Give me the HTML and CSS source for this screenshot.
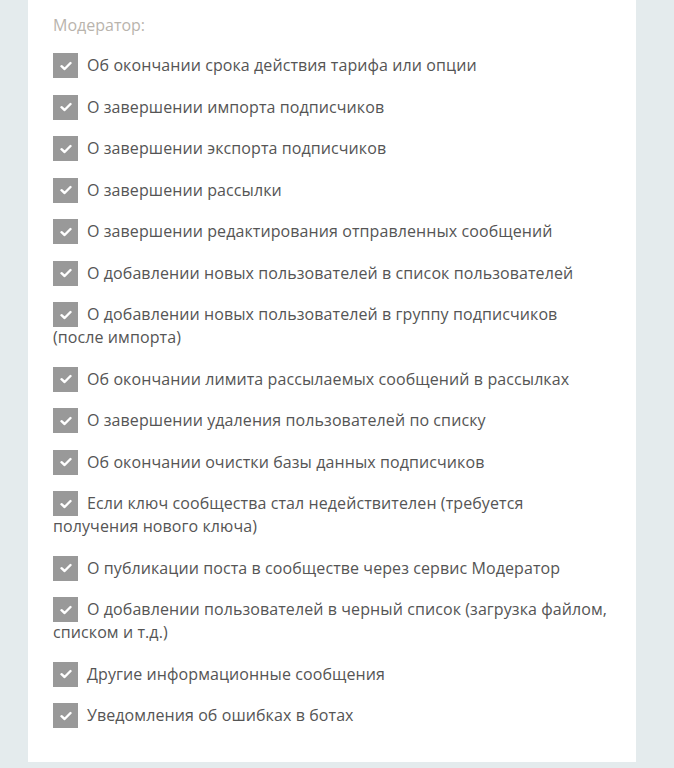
FILE: index.html
```html
<!DOCTYPE html>
<html lang="ru">
<head>
<meta charset="utf-8">
<link rel="stylesheet" href="styles.css">
</head>
<body>
<div class="panel">
  <div class="title">Модератор:</div>
  <ul class="list">
    <li class="item"><span class="cb"><svg viewBox="0 0 12 10" width="12" height="10"><path d="M1.5 5.2 L4.6 8 L10.5 2" fill="none" stroke="#fff" stroke-width="2.4" stroke-linecap="round" stroke-linejoin="round"/></svg></span>Об окончании срока действия тарифа или опции</li>
    <li class="item"><span class="cb"><svg viewBox="0 0 12 10" width="12" height="10"><path d="M1.5 5.2 L4.6 8 L10.5 2" fill="none" stroke="#fff" stroke-width="2.4" stroke-linecap="round" stroke-linejoin="round"/></svg></span>О завершении импорта подписчиков</li>
    <li class="item"><span class="cb"><svg viewBox="0 0 12 10" width="12" height="10"><path d="M1.5 5.2 L4.6 8 L10.5 2" fill="none" stroke="#fff" stroke-width="2.4" stroke-linecap="round" stroke-linejoin="round"/></svg></span>О завершении экспорта подписчиков</li>
    <li class="item"><span class="cb"><svg viewBox="0 0 12 10" width="12" height="10"><path d="M1.5 5.2 L4.6 8 L10.5 2" fill="none" stroke="#fff" stroke-width="2.4" stroke-linecap="round" stroke-linejoin="round"/></svg></span>О завершении рассылки</li>
    <li class="item"><span class="cb"><svg viewBox="0 0 12 10" width="12" height="10"><path d="M1.5 5.2 L4.6 8 L10.5 2" fill="none" stroke="#fff" stroke-width="2.4" stroke-linecap="round" stroke-linejoin="round"/></svg></span>О завершении редактирования отправленных сообщений</li>
    <li class="item"><span class="cb"><svg viewBox="0 0 12 10" width="12" height="10"><path d="M1.5 5.2 L4.6 8 L10.5 2" fill="none" stroke="#fff" stroke-width="2.4" stroke-linecap="round" stroke-linejoin="round"/></svg></span>О добавлении новых пользователей в список пользователей</li>
    <li class="item"><span class="cb"><svg viewBox="0 0 12 10" width="12" height="10"><path d="M1.5 5.2 L4.6 8 L10.5 2" fill="none" stroke="#fff" stroke-width="2.4" stroke-linecap="round" stroke-linejoin="round"/></svg></span>О добавлении новых пользователей в группу подписчиков (после импорта)</li>
    <li class="item"><span class="cb"><svg viewBox="0 0 12 10" width="12" height="10"><path d="M1.5 5.2 L4.6 8 L10.5 2" fill="none" stroke="#fff" stroke-width="2.4" stroke-linecap="round" stroke-linejoin="round"/></svg></span>Об окончании лимита рассылаемых сообщений в рассылках</li>
    <li class="item"><span class="cb"><svg viewBox="0 0 12 10" width="12" height="10"><path d="M1.5 5.2 L4.6 8 L10.5 2" fill="none" stroke="#fff" stroke-width="2.4" stroke-linecap="round" stroke-linejoin="round"/></svg></span>О завершении удаления пользователей по списку</li>
    <li class="item"><span class="cb"><svg viewBox="0 0 12 10" width="12" height="10"><path d="M1.5 5.2 L4.6 8 L10.5 2" fill="none" stroke="#fff" stroke-width="2.4" stroke-linecap="round" stroke-linejoin="round"/></svg></span>Об окончании очистки базы данных подписчиков</li>
    <li class="item"><span class="cb"><svg viewBox="0 0 12 10" width="12" height="10"><path d="M1.5 5.2 L4.6 8 L10.5 2" fill="none" stroke="#fff" stroke-width="2.4" stroke-linecap="round" stroke-linejoin="round"/></svg></span>Если ключ сообщества стал недействителен (требуется получения нового ключа)</li>
    <li class="item"><span class="cb"><svg viewBox="0 0 12 10" width="12" height="10"><path d="M1.5 5.2 L4.6 8 L10.5 2" fill="none" stroke="#fff" stroke-width="2.4" stroke-linecap="round" stroke-linejoin="round"/></svg></span>О публикации поста в сообществе через сервис Модератор</li>
    <li class="item"><span class="cb"><svg viewBox="0 0 12 10" width="12" height="10"><path d="M1.5 5.2 L4.6 8 L10.5 2" fill="none" stroke="#fff" stroke-width="2.4" stroke-linecap="round" stroke-linejoin="round"/></svg></span>О добавлении пользователей в черный список (загрузка файлом, списком и т.д.)</li>
    <li class="item"><span class="cb"><svg viewBox="0 0 12 10" width="12" height="10"><path d="M1.5 5.2 L4.6 8 L10.5 2" fill="none" stroke="#fff" stroke-width="2.4" stroke-linecap="round" stroke-linejoin="round"/></svg></span>Другие информационные сообщения</li>
    <li class="item"><span class="cb"><svg viewBox="0 0 12 10" width="12" height="10"><path d="M1.5 5.2 L4.6 8 L10.5 2" fill="none" stroke="#fff" stroke-width="2.4" stroke-linecap="round" stroke-linejoin="round"/></svg></span>Уведомления об ошибках в ботах</li>
  </ul>
</div>
</body>
</html>
```

FILE: styles.css
```css
html, body {
  margin: 0;
  padding: 0;
}
body {
  background: #e4ebed;
  font-family: "Open Sans", "Noto Sans", sans-serif;
  font-size: 16px;
  color: #555555;
  padding-left: 28px;
  width: 608px;
}
.panel {
  background: #ffffff;
  padding: 13px 27.5px 24px 25px;
  height: 725px;
}
.title {
  color: #b9b4ad;
  line-height: 24px;
  margin-bottom: 17px;
}
.list {
  list-style: none;
  margin: 0;
  padding: 0;
}
.item {
  line-height: 23px;
  margin-bottom: 18.5px;
  letter-spacing: 0.09px;
}
.cb {
  display: inline-flex;
  align-items: center;
  justify-content: center;
  width: 25px;
  height: 25px;
  background: #999999;
  vertical-align: top;
  margin: -1px 9px -1px 0;
}
.cb svg {
  display: block;
}
```
